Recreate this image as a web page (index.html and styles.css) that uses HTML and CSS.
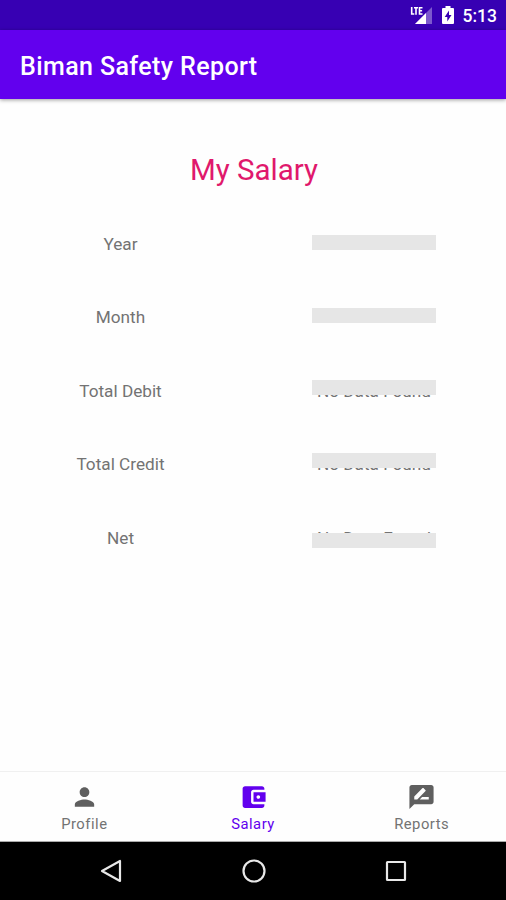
FILE: index.html
```html
<!DOCTYPE html>
<html lang="en">

<head>
	<meta charset="utf-8">
	<meta name="viewport" content="width=device-width, initial-scale=1">
	<title>Biman Safety Report</title>
	<link rel="stylesheet" href="styles.css">
</head>

<body>
	<div class="status-bar">
		<svg class="signal" width="22" height="20" viewBox="0 0 22 20">
			<path d="M22 2v17H5z" fill="#fff" opacity=".35"/>
			<path d="M16 8v11H5z" fill="#fff"/>
			<path d="M1.700 2v7h2.600M4 2.700h4M6 2.700v7M12.500 2.700H9.500v6.300h3M9.500 5.700h2.600" fill="none" stroke="#fff" stroke-width="1.600"/>
		</svg>
		<svg class="battery" width="12" height="18" viewBox="0 0 12 18">
			<path d="M3.500 0h5v2H11q1 0 1 1v14q0 1-1 1H1q-1 0-1-1V3q0-1 1-1h2.500z" fill="#fff"/>
			<path d="M7 4.500L2.700 11h2.600v4.500L9.500 9H7z" fill="#3700b3"/>
		</svg>
		<span>5:13</span>
	</div>
	<header class="app-bar">
		<h1>Biman Safety Report</h1>
	</header>
	<main>
		<h2>My Salary</h2>
		<dl class="salary">
			<dt>Year</dt>
			<dd><span class="value empty"></span></dd>
			<dt>Month</dt>
			<dd><span class="value empty"></span></dd>
			<dt>Total Debit</dt>
			<dd><span class="value debit">No Data Found</span></dd>
			<dt>Total Credit</dt>
			<dd><span class="value credit">No Data Found</span></dd>
			<dt>Net</dt>
			<dd><span class="value net">No Data Found</span></dd>
		</dl>
	</main>
	<nav class="tabs">
		<a>
			<svg viewBox="0 0 24 24"><path d="M12 12c2.210 0 4-1.790 4-4s-1.790-4-4-4-4 1.790-4 4 1.790 4 4 4zm0 2c-2.670 0-8 1.340-8 4v2h16v-2c0-2.660-5.330-4-8-4z"/></svg>
			<span>Profile</span>
		</a>
		<a class="active">
			<svg viewBox="0 0 24 24"><path d="M21 18v1c0 1.100-.9 2-2 2H5c-1.110 0-2-.9-2-2V5c0-1.100.89-2 2-2h14c1.100 0 2 .9 2 2v1h-9c-1.110 0-2 .9-2 2v8c0 1.100.89 2 2 2h9zm-9-2h10V8H12v8zm4-2.500c-.83 0-1.500-.67-1.500-1.500s.67-1.500 1.500-1.500 1.500.67 1.500 1.500-.67 1.500-1.500 1.500z"/></svg>
			<span>Salary</span>
		</a>
		<a>
			<svg viewBox="0 0 24 24"><path d="M20 2H4c-1.100 0-1.990.9-1.990 2L2 22l4-4h14c1.100 0 2-.9 2-2V4c0-1.100-.9-2-2-2zM6 14v-2.470l6.880-6.880c.2-.2.510-.2.710 0l1.770 1.770c.2.200.2.510 0 .710L8.470 14H6zm12 0h-7.500l2-2H18v2z"/></svg>
			<span>Reports</span>
		</a>
	</nav>
	<div class="system-bar">
		<svg viewBox="0 0 26 26"><path d="M22 3v20L4 13z"/></svg>
		<svg viewBox="0 0 26 26"><circle cx="13" cy="13" r="10.500"/></svg>
		<svg viewBox="0 0 26 26"><rect x="4" y="4" width="18" height="18" rx=".5"/></svg>
	</div>
</body>

</html>
```
FILE: styles.css
```css
* {
	box-sizing: border-box;
	margin: 0;
	padding: 0;
}

body {
	display: flex;
	flex-direction: column;
	height: 900px;
	background: #fefefe;
	color: #737373;
	font-family: Roboto, "Noto Sans", sans-serif;
	font-size: 17.2px;
	overflow: hidden;
}

.status-bar {
	display: flex;
	justify-content: flex-end;
	align-items: center;
	height: 30px;
	padding: 2px 9px 0 0;
	background: #3700b3;
	color: #fff;
	font-size: 17.5px;
	font-weight: 500;
}

.signal {
	margin: 0 10px 2px 0;
}

.battery {
	margin: 0 9px 2px 0;
}

.app-bar {
	display: flex;
	align-items: center;
	height: 69px;
	padding: 3px 20px 0;
	background: #6200ee;
	color: #fff;
	box-shadow: 0 1px 4px rgba(0, 0, 0, .4);
}

.app-bar h1 {
	font-size: 25px;
	font-weight: 500;
	letter-spacing: .4px;
}

main {
	flex: 1;
	padding-top: 53px;
}

main h2 {
	padding-left: 2px;
	color: #e0186c;
	font-size: 29.5px;
	font-weight: 400;
	line-height: 36px;
	text-align: center;
}

.salary {
	display: grid;
	grid-template-columns: 241px 266px;
	grid-auto-rows: 73.6px;
	padding-top: 19.7px;
	text-align: center;
	line-height: 73.6px;
}

.value {
	display: inline-block;
	position: relative;
	width: 124px;
	height: 73.6px;
	vertical-align: top;
}

/* grey strip laid over the value */
.value::after {
	content: "";
	position: absolute;
	top: 27px;
	left: 0;
	width: 124px;
	height: 15px;
	background: #e6e6e6;
}

.value.debit::after,
.value.credit::after {
	top: 25px;
}

.value.net::after {
	top: 31px;
}

.tabs {
	display: flex;
	height: 71px;
	border-top: 1px solid #f0f0f0;
	border-bottom: 1px solid #aaa;
	font-size: 14.8px;
	letter-spacing: .5px;
}

.tabs a {
	display: flex;
	flex: 1;
	flex-direction: column;
	align-items: center;
	padding-top: 10px;
}

.tabs svg {
	width: 29px;
	height: 30px;
	fill: #5f5f5f;
}

.tabs span {
	margin-top: 3px;
	line-height: 18px;
}

.tabs .active {
	color: #6200ee;
}

.tabs .active svg {
	fill: #6200ee;
}

.system-bar {
	display: flex;
	justify-content: space-between;
	align-items: center;
	height: 58px;
	padding: 0 97px 0 98px;
	background: #000;
}

.system-bar svg {
	width: 26px;
	height: 26px;
	fill: none;
	stroke: #e8e8e8;
	stroke-width: 2.2;
	stroke-linejoin: round;
}
```
